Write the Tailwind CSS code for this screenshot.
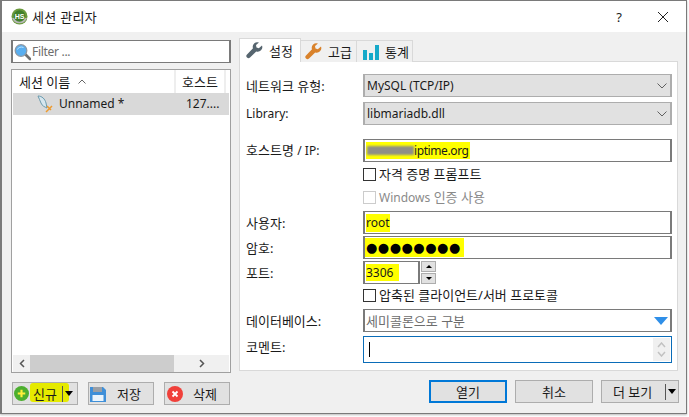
<!DOCTYPE html>
<html lang="ko">
<head>
<meta charset="UTF-8">
<title>세션 관리자</title>
<script src="https://cdn.jsdelivr.net/npm/@tailwindcss/browser@4"></script>
</head>
<body class="bg-white w-[689px] h-[417px] overflow-hidden text-[13px] leading-[16px] text-[#1a1a1a] font-['Noto_Sans','Noto_Sans_CJK_KR',sans-serif]">
<div class="w-[687px] h-[414px] border-l-2 border-r border-t border-b border-[#7a7a7a] flex flex-col bg-[#f0f0f0] shadow-[0_1px_2px_#bbbbbb]">

  <!-- title bar -->
  <div class="h-[31px] bg-white flex items-center pl-[9px] shrink-0">
    <svg width="17" height="17" viewBox="0 0 17 17"><circle cx="8.5" cy="8.5" r="8" fill="#6a9a3c"/><path d="M1 10a8 8 0 0 0 15 0z" fill="#b8b8b8"/><circle cx="8.5" cy="8" r="5.8" fill="#3f7f2c"/><text x="8.5" y="10.5" text-anchor="middle" font-size="7" font-weight="700" fill="#fff" font-family="Liberation Sans">HS</text></svg>
    <span class="ml-[4px] text-[13px] tracking-[0.3px]">세션 관리자</span>
    <span class="ml-auto mr-[35px] text-[13px]">?</span>
    <svg class="mr-[17px]" width="12" height="12" viewBox="0 0 12 12"><path d="M1 1l10 10M11 1L1 11" stroke="#222" fill="none"/></svg>
  </div>

  <div class="flex flex-1 min-h-0">
    <!-- left side -->
    <div class="w-[220px] ml-[9px] mt-[8px] flex flex-col shrink-0">
      <div class="h-[23px] border-2 border-[#7a7a7a] border-t-[1.5px] border-b-[1.5px] bg-white flex items-center pl-[1px]">
        <svg width="17" height="18" viewBox="0 0 17 18"><path d="M11 11l5 5" stroke="#6f6f6f" stroke-width="2.6" stroke-linecap="round"/><circle cx="7" cy="7.5" r="5.8" fill="#58aef0" stroke="#8b98a5" stroke-width="1.3"/><path d="M3.5 6.5a4 3 0 0 1 6-2" stroke="#bfe3fb" fill="none"/></svg>
        <span class="ml-[1px] text-[12px] tracking-[-0.3px] text-[#6d6d6d]">Filter ...</span>
      </div>
      <div class="mt-[6px] h-[304px] border border-[#a0a0a0] bg-white flex flex-col">
        <div class="h-[23px] flex items-center shrink-0">
          <div class="w-[164px] h-full flex items-center pl-[7px] border-r-2 border-[#eeeeee]">세션 이름<svg class="ml-[8px]" width="8" height="5" viewBox="0 0 8 5"><path d="M.5 4.5L4 1l3.500 3.500" stroke="#666" fill="none"/></svg></div>
          <div class="w-[50px] h-full flex items-center justify-center border-r-2 border-[#eeeeee]">호스트</div>
        </div>
        <div class="h-[22px] mx-[1px] bg-[#d9d9d9] flex items-center shrink-0 text-[12px]">
          <svg class="ml-[24px]" width="17" height="18" viewBox="0 0 17 18"><path d="M1 1c4 0 7 3 8 7l1 5c-2-1-5-2-6-5C3 6 2 3 1 1z" fill="#d6e6ee" stroke="#5f93a8" stroke-width=".9"/><path d="M9 17l6-6M10 11l4 4" stroke="#ee9a2d" stroke-width="1.500"/></svg>
          <span class="ml-[5px] w-[127px]">Unnamed *</span>
          <span>127....</span>
        </div>
        <div class="flex-1"></div>
        <div class="h-[17px] mx-[1px] bg-[#f0f0f0] flex items-center shrink-0">
          <div class="w-[17px] flex justify-center"><svg width="6" height="9" viewBox="0 0 6 9"><path d="M5 1L1.500 4.500 5 8" stroke="#555" stroke-width="1.500" fill="none"/></svg></div>
          <div class="w-[144px] h-full bg-[#cdcdcd]"></div>
          <div class="flex-1 flex justify-center"><svg width="6" height="9" viewBox="0 0 6 9"><path d="M1 1l3.500 3.500L1 8" stroke="#555" stroke-width="1.500" fill="none"/></svg></div>
        </div>
      </div>
      <div class="mt-[9px] flex gap-[10px] ml-[1px]">
        <div class="w-[66px] h-[23px] bg-[#e1e1e1] border border-[#adadad] flex items-center pl-[1px] relative">
          <div class="absolute left-[17px] top-[0px] w-[39px] h-[19px] bg-[#e5ea00] rounded-[3px]"></div>
          <svg class="relative" width="15" height="15" viewBox="0 0 14 14"><circle cx="7" cy="7" r="7" fill="#4caf2f"/><path d="M7 3.500v7M3.500 7h7" stroke="#ffef3a" stroke-width="2"/></svg>
          <span class="relative ml-[4px]">신규</span>
          <span class="relative ml-[5px] w-[1px] h-[16px] bg-[#555]"></span>
          <span class="relative ml-[2px] w-0 h-0 border-x-[4px] border-x-transparent border-t-[5px] border-t-black"></span>
        </div>
        <div class="w-[66px] h-[23px] bg-[#e1e1e1] border border-[#adadad] flex items-center pl-[1px]">
          <svg width="16" height="16" viewBox="0 0 16 16"><path d="M0 1h13l3 3v12H0z" fill="#3f8fd8"/><rect x="3" y="1" width="9" height="5" fill="#9a9fa5"/><rect x="2.500" y="9" width="11" height="6" fill="#eaf4fc"/></svg>
          <span class="ml-[11px]">저장</span>
        </div>
        <div class="w-[66px] h-[23px] bg-[#e1e1e1] border border-[#adadad] flex items-center pl-[2px]">
          <svg width="16" height="16" viewBox="0 0 16 16"><circle cx="8" cy="8" r="8" fill="#f0403a"/><path d="M5.500 5.500l5 5M10.500 5.500l-5 5" stroke="#fff" stroke-width="1.800"/></svg>
          <span class="ml-[10px]">삭제</span>
        </div>
      </div>
    </div>

    <!-- right side -->
    <div class="ml-[8px] flex-1 min-w-0 mt-[7px] mr-[8px] flex flex-col">
      <div class="flex h-[23px] items-end relative z-10">
        <div class="w-[62px] h-[24px] bg-white border border-b-0 border-[#d9d9d9] flex items-center pl-[6px]">
          <svg width="17" height="17" viewBox="0 0 17 17"><path d="M16 3.500l-3.200 2.700-2.300-.8-.5-2.400L13 0.500A4.600 4.600 0 0 0 7 6.300L1 12.500a2 2 0 0 0 3 3l6.200-6A4.600 4.600 0 0 0 16 3.500z" fill="#56656f"/></svg>
          <span class="ml-[6px]">설정</span>
        </div>
        <div class="w-[56px] h-[22px] bg-[#f0f0f0] border border-l-0 border-b-0 border-[#d9d9d9] flex items-center pl-[4px]">
          <svg width="17" height="17" viewBox="0 0 17 17"><path d="M16 3.500l-3.200 2.700-2.300-.8-.5-2.400L13 0.500A4.600 4.600 0 0 0 7 6.300L1 12.500a2 2 0 0 0 3 3l6.200-6A4.600 4.600 0 0 0 16 3.500z" fill="#d9822b"/></svg>
          <span class="ml-[6px]">고급</span>
        </div>
        <div class="w-[56px] h-[22px] bg-[#f0f0f0] border border-l-0 border-b-0 border-[#d9d9d9] flex items-center pl-[5px]">
          <svg width="17" height="16" viewBox="0 0 17 16"><path d="M1 6h4v10H1zM7 9h4v7H7zM13 1h4v15h-4z" fill="#16a9c9"/></svg>
          <span class="ml-[6px]">통계</span>
        </div>
      </div>
      <div class="h-[310px] -mt-[1px] bg-white border border-[#d9d9d9] pl-[6px] pr-[5px] pt-[12px] flex flex-col">

        <div class="flex items-center h-[23px]">
          <span class="w-[117px] shrink-0">네트워크 유형:</span>
          <div class="flex-1 h-full bg-[#e1e1e1] border-2 border-[#adadad] border-t-[1.5px] border-b-[1.5px] flex items-center pl-[2px] pr-[3px] text-[12px]">MySQL (TCP/IP)<svg class="ml-auto" width="10" height="6" viewBox="0 0 10 6"><path d="M.5 .5L5 5 9.500 .5" stroke="#606060" fill="none"/></svg></div>
        </div>
        <div class="flex items-center h-[23px] mt-[5px]">
          <span class="w-[117px] shrink-0 text-[12px]">Library:</span>
          <div class="flex-1 h-full bg-[#e1e1e1] border-2 border-[#adadad] border-t-[1.5px] border-b-[1.5px] flex items-center pl-[2px] pr-[3px] text-[12px]">libmariadb.dll<svg class="ml-auto" width="10" height="6" viewBox="0 0 10 6"><path d="M.5 .5L5 5 9.500 .5" stroke="#606060" fill="none"/></svg></div>
        </div>

        <div class="flex items-center h-[23px] mt-[14px]">
          <span class="w-[117px] shrink-0">호스트명 <span class="text-[12px]">/ IP:</span></span>
          <div class="flex-1 h-full bg-white border-2 border-[#7a7a7a] border-t-[1.5px] border-b-[1.5px] flex items-center pl-[1px]">
            <span class="bg-[#ffff00] h-[17px] flex items-center pr-[1px] text-[12px]"><span class="w-[47px] h-[9px] ml-[1px] bg-[#8f8f86] blur-[1px]"></span><span class="tracking-[-0.4px]">iptime.org</span></span>
          </div>
        </div>
        <div class="flex items-center h-[14px] mt-[5px] pl-[117px]">
          <span class="w-[13px] h-[13px] border border-[#333] bg-white shrink-0"></span>
          <span class="ml-[3px]">자격 증명 프롬프트</span>
        </div>
        <div class="flex items-center h-[14px] mt-[9px] pl-[117px] text-[#8a8a8a]">
          <span class="w-[13px] h-[13px] border border-[#cccccc] bg-white shrink-0"></span>
          <span class="ml-[3px]"><span class="text-[12px]">Windows</span> 인증 사용</span>
        </div>

        <div class="flex items-center h-[23px] mt-[7px]">
          <span class="w-[117px] shrink-0">사용자:</span>
          <div class="flex-1 h-full bg-white border-2 border-[#7a7a7a] border-t-[1.5px] border-b-[1.5px] flex items-center pl-[1px] text-[12px]"><span class="bg-[#ffff00] h-[18px] flex items-center">root</span></div>
        </div>
        <div class="flex items-center h-[23px] mt-[2px]">
          <span class="w-[117px] shrink-0">암호:</span>
          <div class="flex-1 h-full bg-white border-2 border-[#7a7a7a] border-t-[1.5px] border-b-[1.5px] flex items-center pl-[0px]"><span class="bg-[#ffff00] h-[19px] w-[99px] pl-[1px] flex items-center text-[13px] tracking-[0.5px] text-black font-['DejaVu_Sans']">●●●●●●●●</span></div>
        </div>
        <div class="flex items-center h-[23px] mt-[2px]">
          <span class="w-[117px] shrink-0">포트:</span>
          <div class="w-[57px] h-full bg-white border-2 border-[#7a7a7a] border-t-[1.5px] border-b-[1.5px] flex items-center pl-[1px] text-[12px]"><span class="bg-[#ffff00] h-[17px] w-[33px] flex items-center">3306</span></div>
          <div class="ml-[1px] w-[15px] h-full flex flex-col gap-[1px]">
            <div class="h-[11px] bg-[#e1e1e1] border border-[#adadad] flex items-center justify-center"><span class="w-0 h-0 border-x-[3px] border-x-transparent border-b-[3px] border-b-black"></span></div>
            <div class="h-[11px] bg-[#e1e1e1] border border-[#adadad] flex items-center justify-center"><span class="w-0 h-0 border-x-[3px] border-x-transparent border-t-[3px] border-t-black"></span></div>
          </div>
        </div>
        <div class="flex items-center h-[14px] mt-[4px] pl-[117px]">
          <span class="w-[13px] h-[13px] border border-[#333] bg-white shrink-0"></span>
          <span class="ml-[3px]">압축된 클라이언트/서버 프로토콜</span>
        </div>

        <div class="flex items-center h-[23px] mt-[7px]">
          <span class="w-[117px] shrink-0">데이터베이스:</span>
          <div class="flex-1 h-full bg-white border-2 border-[#7a7a7a] border-t-[1.5px] border-b-[1.5px] flex items-center pl-[1px] pr-[2px] text-[#6d6d6d]">세미콜론으로 구분<span class="ml-auto w-0 h-0 border-x-[7px] border-x-transparent border-t-[8px] border-t-[#2f8fe8]"></span></div>
        </div>
        <div class="flex items-center h-[27px] mt-[4px]">
          <span class="w-[117px] shrink-0 -mt-[6px]">코멘트:</span>
          <div class="flex-1 h-full bg-white border border-[#0a6cb8] flex items-center pl-[5px] pr-[1px]">
            <span class="w-[1px] h-[15px] bg-black"></span>
            <div class="ml-auto w-[17px] h-[23px] bg-[#f0f0f0] flex flex-col items-center justify-around py-[2px]">
              <svg width="9" height="6" viewBox="0 0 9 6"><path d="M1 5l3.500-4L8 5" stroke="#c2c2c2" stroke-width="1.500" fill="none"/></svg>
              <svg width="9" height="6" viewBox="0 0 9 6"><path d="M1 1l3.500 4L8 1" stroke="#c2c2c2" stroke-width="1.500" fill="none"/></svg>
            </div>
          </div>
        </div>
      </div>
      <div class="mt-[9px] flex gap-[8px] justify-end -mr-[1px]">
        <div class="w-[78px] h-[23px] bg-[#e1e1e1] border-2 border-[#0078d7] flex items-center justify-center">열기</div>
        <div class="w-[78px] h-[23px] bg-[#e1e1e1] border border-[#adadad] flex items-center justify-center">취소</div>
        <div class="w-[78px] h-[23px] bg-[#e1e1e1] border border-[#adadad] flex items-center pl-[11px] pr-[2px]"><span class="whitespace-nowrap shrink-0">더 보기</span><span class="ml-auto w-[1px] h-[16px] bg-[#555]"></span><span class="ml-[2px] w-0 h-0 border-x-[4px] border-x-transparent border-t-[5px] border-t-black"></span></div>
      </div>
    </div>
  </div>
</div>
</body>
</html>
